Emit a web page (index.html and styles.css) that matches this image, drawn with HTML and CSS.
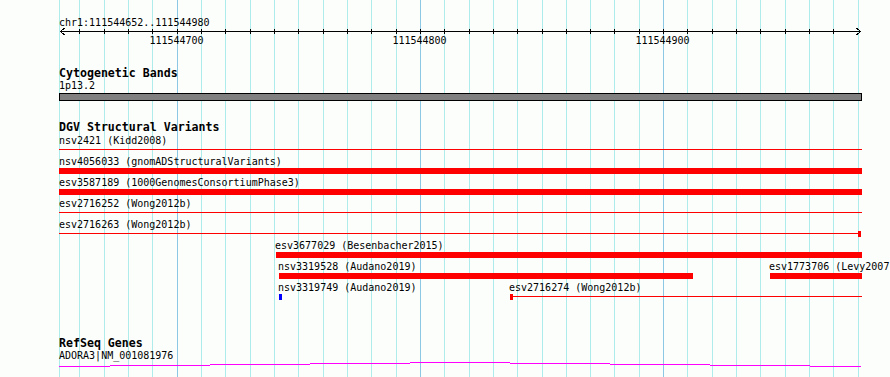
FILE: index.html
```html
<!DOCTYPE html>
<html lang="en">
<head>
  <meta charset="UTF-8" />
  <title>chr1:111544652..111544980</title>
  <link rel="stylesheet" href="styles.css">
</head>
<body>

<div id="browser">
  <svg class="grid" width="890" height="377">
    <path class="minor" d="M59.5 0V377M79.5 0V377M104.5 0V377M128.5 0V377M152.5 0V377M201.5 0V377M225.5 0V377M250.5 0V377M274.5 0V377M298.5 0V377M323.5 0V377M347.5 0V377M371.5 0V377M396.5 0V377M444.5 0V377M469.5 0V377M493.5 0V377M517.5 0V377M542.5 0V377M566.5 0V377M590.5 0V377M614.5 0V377M639.5 0V377M687.5 0V377M712.5 0V377M736.5 0V377M760.5 0V377M785.5 0V377M809.5 0V377M833.5 0V377M858.5 0V377" />
    <path class="major" d="M177.5 0V377M420.5 0V377M663.5 0V377" />
  </svg>

  <div class="ruler">
    <div class="ruler-label">chr1:111544652..111544980</div>
    <svg class="ruler-axis" width="890" height="18">
      <path d="M60 2.5H861" />
      <path d="M79.5 0V5M104.5 0V5M128.5 0V5M152.5 0V5M177.5 0V5M201.5 0V5M225.5 0V5M250.5 0V5M274.5 0V5M298.5 0V5M323.5 0V5M347.5 0V5M371.5 0V5M396.5 0V5M420.5 0V5M444.5 0V5M469.5 0V5M493.5 0V5M517.5 0V5M542.5 0V5M566.5 0V5M590.5 0V5M614.5 0V5M639.5 0V5M663.5 0V5M687.5 0V5M712.5 0V5M736.5 0V5M760.5 0V5M785.5 0V5M809.5 0V5M833.5 0V5" />
      <path d="M64.5 -1L60.5 2.5L64.5 6M856.5 -1L860.5 2.5L856.5 6" />
      <text x="176.5" y="15">111544700</text>
      <text x="419.5" y="15">111544800</text>
      <text x="662.5" y="15">111544900</text>
    </svg>
  </div>

  <div class="track track-cyto">
    <div class="track-title">Cytogenetic Bands</div>
    <div class="band-label">1p13.2</div>
    <div class="band"></div>
  </div>

  <div class="track track-dgv">
    <div class="track-title">DGV Structural Variants</div>
    <div class="rows">
      <div class="row">
        <span class="label" style="left:59px">nsv2421 (Kidd2008)</span>
        <div class="sv-line" style="left:59px;width:803px"></div>
      </div>
      <div class="row">
        <span class="label" style="left:59px">nsv4056033 (gnomADStructuralVariants)</span>
        <div class="sv-bar" style="left:59px;width:803px"></div>
      </div>
      <div class="row">
        <span class="label" style="left:59px">esv3587189 (1000GenomesConsortiumPhase3)</span>
        <div class="sv-bar" style="left:59px;width:803px"></div>
      </div>
      <div class="row">
        <span class="label" style="left:59px">esv2716252 (Wong2012b)</span>
        <div class="sv-line" style="left:59px;width:803px"></div>
      </div>
      <div class="row">
        <span class="label" style="left:59px">esv2716263 (Wong2012b)</span>
        <div class="sv-line" style="left:59px;width:799px"></div>
        <div class="sv-cap" style="left:858px"></div>
      </div>
      <div class="row">
        <span class="label" style="left:275px">esv3677029 (Besenbacher2015)</span>
        <div class="sv-bar" style="left:276px;width:586px"></div>
      </div>
      <div class="row">
        <span class="label" style="left:278px">nsv3319528 (Audano2019)</span>
        <div class="sv-bar" style="left:279px;width:414px"></div>
        <span class="label" style="left:769px">esv1773706 (Levy2007</span>
        <div class="sv-bar" style="left:770px;width:92px"></div>
      </div>
      <div class="row">
        <span class="label" style="left:278px">nsv3319749 (Audano2019)</span>
        <div class="sv-cap blue" style="left:279px"></div>
        <span class="label" style="left:509px">esv2716274 (Wong2012b)</span>
        <div class="sv-cap" style="left:510px"></div>
        <div class="sv-line" style="left:513px;width:349px"></div>
      </div>
    </div>
  </div>

  <div class="track track-genes">
    <div class="track-title">RefSeq Genes</div>
    <div class="gene-label">ADORA3|NM_001081976</div>
    <svg class="gene" width="890" height="5">
      <path d="M59 4.5H110M110 3.5H210M210 2.5H310M310 1.5H410M410 0.5H510M510 1.5H610M610 2.5H710M710 3.5H810M810 4.5H861" />
    </svg>
  </div>
</div>

</body>
</html>
```

FILE: styles.css
```css
body {
  margin: 0;
  background: #fcfefc;
  color: #000;
  font-family: "DejaVu Sans Mono", monospace;
  font-size: 10px;
}

#browser {
  position: relative;
  z-index: 0;
  width: 890px;
  height: 377px;
  padding-top: 16px;
  box-sizing: border-box;
  overflow: hidden;
}

.grid {
  position: absolute;
  left: 0;
  top: 0;
  z-index: -1;
}

.grid path {
  fill: none;
  stroke-width: 1;
  shape-rendering: crispEdges;
}

.grid .minor {
  stroke: #aeecec;
}

.grid .major {
  stroke: #8cc8e4;
}

/* ruler */
.ruler-label {
  padding-left: 59px;
  height: 13px;
  line-height: 13px;
}

.ruler-axis {
  display: block;
  overflow: visible;
}

.ruler-axis path {
  fill: none;
  stroke: #000;
  stroke-width: 1;
  shape-rendering: crispEdges;
}

.ruler-axis text {
  font-family: "DejaVu Sans Mono", monospace;
  font-size: 10px;
  text-anchor: middle;
}

/* tracks */
.track-title {
  padding-left: 59px;
  height: 12px;
  line-height: 12px;
  font-size: 11.6px;
  font-weight: bold;
  white-space: nowrap;
}

.track-cyto {
  margin-top: 20px;
}

.band-label,
.gene-label {
  padding-left: 59px;
  height: 13px;
  line-height: 13px;
}

.band {
  margin: 1px 0 0 59px;
  width: 803px;
  height: 8px;
  box-sizing: border-box;
  background: #808080;
  border: 1px solid #000;
}

.track-dgv {
  margin-top: 20px;
}

.rows {
  margin-top: 1px;
}

.row {
  position: relative;
  height: 21px;
}

.row .label {
  position: absolute;
  top: 0;
  line-height: 13px;
  white-space: nowrap;
}

.sv-line,
.sv-bar,
.sv-cap {
  position: absolute;
  background: #ff0000;
}

.sv-line {
  top: 15px;
  height: 1px;
}

.sv-bar {
  top: 13px;
  height: 6px;
}

.sv-cap {
  top: 13px;
  width: 3px;
  height: 6px;
}

.sv-cap.blue {
  background: #0000ff;
}

.track-genes {
  margin-top: 35px;
}

.gene {
  display: block;
}

.gene path {
  fill: none;
  stroke: #ff00ff;
  stroke-width: 1;
  shape-rendering: crispEdges;
}
```
